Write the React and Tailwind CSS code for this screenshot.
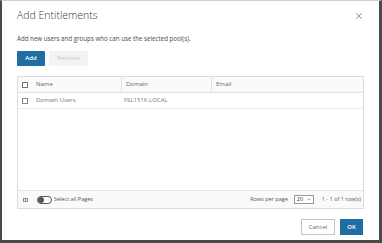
import React from "react";

export default function App() {
  return (
    <div className="w-[382px] h-[243px] bg-white border-t border-t-[#cfcfcf] border-l-2 border-r-[3px] border-b-[3px] border-l-[#4a4a4a] border-r-[#4a4a4a] border-b-[#4a4a4a] overflow-hidden" style={{ fontFamily: '"Open Sans", "Liberation Sans", sans-serif' }}>
      <div className="flex flex-col h-full pl-[15px] pr-[15px] text-[#565656]">
        {/* title */}
        <div className="flex items-start justify-between mt-[7px] h-[15px]">
          <div className="text-[10.5px] leading-[15px] text-[#3a3a3a] font-light">Add Entitlements</div>
          <svg width="8" height="8" viewBox="0 0 8 8" className="mt-[4px] mr-[1px]">
            <path d="M1 1 L7 7 M7 1 L1 7" stroke="#888" strokeWidth="0.9" />
          </svg>
        </div>
        {/* subtitle */}
        <div className="mt-[12px] text-[6.2px] leading-[8px] text-[#4a4a4a]">Add new users and groups who can use the selected pool(s).</div>
        {/* action buttons */}
        <div className="flex gap-[4px] mt-[8px]">
          <div className="w-[28px] h-[15px] bg-[#1f6ea2] rounded-[1px] flex items-center justify-center text-white text-[6px] font-semibold">Add</div>
          <div className="w-[39px] h-[15px] bg-[#f3f3f3] rounded-[1px] flex items-center justify-center text-[#c8c8c8] text-[6px]">Remove</div>
        </div>
        {/* table */}
        <div className="mt-[10px] h-[133px] border border-[#dcdcdc] flex flex-col">
          <div className="flex h-[16px] bg-[#fafafa] border-b border-[#e2e2e2] text-[6px] text-[#666] items-stretch">
            <div className="w-[104px] flex items-center border-r border-[#e2e2e2]">
              <div className="ml-[4px] w-[6px] h-[6px] border border-[#777] bg-white" />
              <span className="ml-[8px]">Name</span>
            </div>
            <div className="w-[90px] flex items-center border-r border-[#e2e2e2]">
              <span className="ml-[4px]">Domain</span>
            </div>
            <div className="flex-1 flex items-center">
              <span className="ml-[4px]">Email</span>
            </div>
          </div>
          <div className="flex h-[16px] border-b border-[#ececec] text-[6px] text-[#777] items-center">
            <div className="w-[104px] flex items-center">
              <div className="ml-[4px] w-[6px] h-[6px] border border-[#888] bg-white" />
              <span className="ml-[8px]">Domain Users</span>
            </div>
            <div className="w-[90px] flex items-center">
              <span className="ml-[2px]">FSL151K.LOCAL</span>
            </div>
            <div className="flex-1" />
          </div>
          <div className="flex-1" />
          <div className="h-[18px] bg-[#fafafa] border-t border-[#e2e2e2] flex items-center text-[5.5px] text-[#555]">
            <svg width="5" height="4" viewBox="0 0 5 4" className="ml-[5px]">
              <rect x="0.5" y="0.5" width="4" height="3" fill="none" stroke="#777" strokeWidth="0.8" />
              <path d="M2.5 0.5 V3.5" stroke="#777" strokeWidth="0.8" />
            </svg>
            <div className="ml-[9px] w-[15px] h-[8px] rounded-full border border-[#555] bg-white relative">
              <div className="absolute left-[0px] top-[0px] w-[6px] h-[6px] rounded-full bg-[#555]" />
            </div>
            <span className="ml-[2px]">Select all Pages</span>
            <div className="flex-1" />
            <span>Rows per page</span>
            <div className="ml-[6px] w-[20px] h-[9px] border border-[#999] bg-white flex items-center justify-between px-[2px] text-[5.5px] text-[#333]">
              <span>20</span>
              <svg width="4" height="3" viewBox="0 0 4 3"><path d="M0.5 0.5 L2 2.2 L3.5 0.5" fill="none" stroke="#4a7ba8" strokeWidth="0.7" /></svg>
            </div>
            <span className="ml-[8px] mr-[2px]">1 - 1 of 1 row(s)</span>
          </div>
        </div>
        {/* footer buttons */}
        <div className="flex justify-end gap-[5px] mt-[10px] mr-[1px]">
          <div className="w-[34px] h-[16px] border border-[#c4c4c4] bg-white flex items-center justify-center text-[6px] text-[#666]">Cancel</div>
          <div className="w-[23px] h-[16px] bg-[#1f6ea2] flex items-center justify-center text-[6px] text-white font-semibold">OK</div>
        </div>
      </div>
    </div>
  );
}
